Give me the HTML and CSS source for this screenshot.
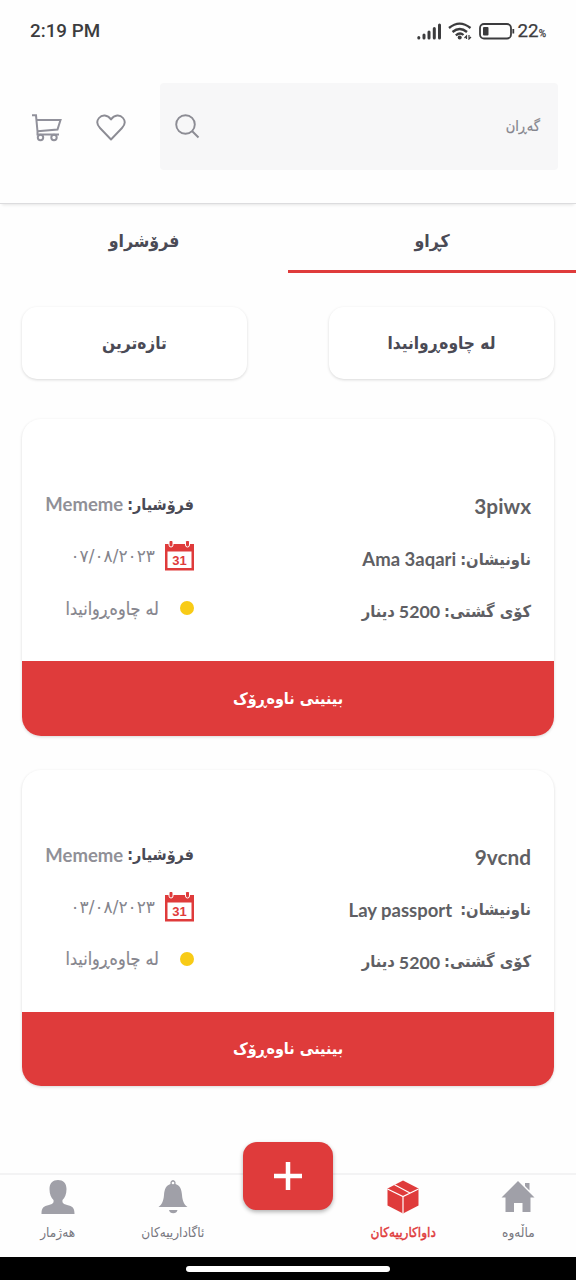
FILE: index.html
```html
<!DOCTYPE html>
<html lang="ckb" dir="rtl">
<head>
<meta charset="utf-8">
<meta name="viewport" content="width=device-width">
<title>داواکارییەکان</title>
<link rel="stylesheet" href="styles.css">
</head>
<body>
<div class="app">
  <div class="status" dir="ltr">
    <span class="clock">2:19 PM</span>
    <svg class="signal" width="25" height="18" viewBox="0 0 25 18"><path d="M1.800 15.500v.5M7 13v3M12 10v6M17.300 6.500v9.500M22.500 3v13" fill="none" stroke="#3c3c3e" stroke-width="3" stroke-linecap="round"/></svg>
    <svg class="wifi" width="24" height="18" viewBox="0 0 24 18"><g fill="none" stroke="#3c3c3e" stroke-width="2.300"><path d="M1 6Q11.500-2.800 22.500 6M4.500 10Q11.700 4 19 10M7.800 13.300Q12 9.800 15.500 13"/></g><circle cx="11.700" cy="15.500" r="2" fill="#3c3c3e"/><path d="M18.500 17v-3l-2 2M21 13v4l2-2" fill="none" stroke="#3c3c3e" stroke-width="1.200"/></svg>
    <svg class="battery" width="36" height="17" viewBox="0 0 36 17"><rect x="1" y="1" width="31" height="14.500" rx="4" fill="none" stroke="#3c3c3e" stroke-width="1.800"/><rect x="4" y="4" width="5.500" height="8.500" rx="1" fill="#3c3c3e"/><path d="M34.300 6v4.500" stroke="#3c3c3e" stroke-width="1.800"/></svg>
    <span class="charge">22<small>%</small></span>
  </div>

  <header class="header" dir="ltr">
    <svg class="cart" width="31" height="28" viewBox="0 0 31 28"><g fill="none" stroke="#91919b" stroke-width="2"><path d="M0 1.300H4L5.500 17.500V20.500H27"/><path d="M4.500 6H28.500L25.500 15.500L5.500 17.300"/><circle cx="8.500" cy="23.500" r="2.700"/><circle cx="22" cy="23.500" r="2.700"/></g></svg>
    <svg class="heart" width="30" height="27" viewBox="0 0 30 27"><path d="M15 25.500L4 14C1 10.800.5 7 3 4C6 .5 11.500.5 15 5.500C18.500.5 24 .5 27 4C29.500 7 29 10.800 26 14Z" fill="none" stroke="#8c8c94" stroke-width="1.900" stroke-linejoin="round"/></svg>
    <div class="search">
      <svg width="25" height="25" viewBox="0 0 25 25"><g fill="none" stroke="#8c8c94" stroke-width="1.900"><circle cx="10.500" cy="10.500" r="9.300"/><path d="M17 17L23.500 23.500"/></g></svg>
      <span class="hint" dir="rtl">گەڕان</span>
    </div>
  </header>

  <nav class="tabs">
    <a class="tab active"><span>کڕاو</span></a>
    <a class="tab"><span>فرۆشراو</span></a>
  </nav>

  <div class="filters">
    <div class="filter"><span>لە چاوەڕوانیدا</span></div>
    <div class="filter"><span>تازەترین</span></div>
  </div>

  <main class="orders">
    <article class="card">
      <div class="info">
        <div class="main-col">
          <div class="code">3piwx</div>
          <div class="row"><span>ناونیشان:</span><span class="latin" dir="ltr">Ama 3aqari</span></div>
          <div class="row"><span>کۆی گشتی:</span><span class="latin amount">5200</span><span>دینار</span></div>
        </div>
        <div class="side-col">
          <div class="row seller"><span>فرۆشیار:</span><span class="latin muted" dir="ltr">Mememe</span></div>
          <div class="row date"><svg class="cal" width="29" height="30" viewBox="0 0 29 30"><path d="M0 3H29V29.500H0Z" fill="#df3b3b"/><path d="M2.500 10.500H26.500V27H2.500Z" fill="#fff"/><rect x="4" y="-1" width="4" height="7" rx="2" fill="#df3b3b" stroke="#fff"/><rect x="20.500" y="-1" width="4" height="7" rx="2" fill="#df3b3b" stroke="#fff"/><text x="14.500" y="23.500" text-anchor="middle" class="cal-day">31</text></svg><span class="date-text" dir="ltr">٠٧/٠٨/٢٠٢٣</span></div>
          <div class="row state"><i class="dot"></i><span class="state-text">لە چاوەڕوانیدا</span></div>
        </div>
      </div>
      <div class="view"><span>بینینی ناوەڕۆک</span></div>
    </article>

    <article class="card">
      <div class="info">
        <div class="main-col">
          <div class="code">9vcnd</div>
          <div class="row wide"><span>ناونیشان:</span><span class="latin" dir="ltr">Lay passport</span></div>
          <div class="row"><span>کۆی گشتی:</span><span class="latin amount">5200</span><span>دینار</span></div>
        </div>
        <div class="side-col">
          <div class="row seller"><span>فرۆشیار:</span><span class="latin muted" dir="ltr">Mememe</span></div>
          <div class="row date"><svg class="cal" width="29" height="30" viewBox="0 0 29 30"><path d="M0 3H29V29.500H0Z" fill="#df3b3b"/><path d="M2.500 10.500H26.500V27H2.500Z" fill="#fff"/><rect x="4" y="-1" width="4" height="7" rx="2" fill="#df3b3b" stroke="#fff"/><rect x="20.500" y="-1" width="4" height="7" rx="2" fill="#df3b3b" stroke="#fff"/><text x="14.500" y="23.500" text-anchor="middle" class="cal-day">31</text></svg><span class="date-text" dir="ltr">٠٣/٠٨/٢٠٢٣</span></div>
          <div class="row state"><i class="dot"></i><span class="state-text">لە چاوەڕوانیدا</span></div>
        </div>
      </div>
      <div class="view"><span>بینینی ناوەڕۆک</span></div>
    </article>
  </main>

  <nav class="bottom">
    <a class="item"><svg width="34" height="34" viewBox="0 0 34 34"><path d="M17 1L33.500 17.500H29.500V32H21.500V23H13V32H4.500V17.500H.5ZM24 3H28.500V10.500L24 6Z" fill="#a0a0a8"/></svg><span>ماڵەوە</span></a>
    <a class="item on"><svg width="34" height="34" viewBox="0 0 34 34"><path d="M17 .5L32.500 8.500V25.500L17 33.500L1.500 25.500V8.500Z" fill="#df3b3b"/><path d="M1.500 9L17 16.500L32.500 9M17 16.500V33.500M8.500 4.800L24 13" fill="none" stroke="#fff" stroke-width="1.200"/></svg><span>داواکارییەکان</span></a>
    <a class="item gap"></a>
    <a class="item"><svg width="34" height="34" viewBox="0 0 34 34"><path d="M17 0A3 3 0 0 1 19.500 4C24 5.500 25.500 9 26 15C26.500 21 28 24.500 31.500 27H2.500C6 24.500 7.500 21 8 15C8.500 9 10 5.500 14.500 4A3 3 0 0 1 17 0ZM13 30H21.500A4.400 4.400 0 0 1 13 30Z" fill="#a0a0a8"/><circle cx="17" cy="3" r="1.300" fill="#fff"/></svg><span>ئاگادارییەکان</span></a>
    <a class="item"><svg width="34" height="34" viewBox="0 0 34 34"><path d="M17 0C22 0 25.500 3 25.500 9C25.500 14 24 17.500 21.500 20C21 23 22.500 24 26 25C31.500 26.300 33.500 27.500 33.500 34H.5C.5 27.500 2.500 26.300 8 25C11.500 24 13 23 12.500 20C10 17.500 8.500 14 8.500 9C8.500 3 12 0 17 0Z" fill="#a0a0a8"/></svg><span>هەژمار</span></a>
    <a class="add"><svg width="28" height="28" viewBox="0 0 28 28"><path d="M14 0V28M0 14H28" stroke="#fff" stroke-width="4.500"/></svg></a>
  </nav>
  <div class="gesture"><i></i></div>
</div>
</body>
</html>
```
FILE: styles.css
```css
* { box-sizing: border-box; }
body {
  margin: 0;
  background: #fefefe;
  color: #4a4a55;
  font-family: "DejaVu Sans Condensed", "DejaVu Sans", sans-serif;
  font-weight: 700;
}
.app { width: 576px; height: 1280px; display: flex; flex-direction: column; overflow: hidden; }
.app span { white-space: nowrap; }

.status {
  height: 62px;
  padding: 0 30px;
  display: flex;
  align-items: center;
  font-family: Roboto, sans-serif;
  font-weight: 500;
  color: #3c3c3e;
}
.clock { font-size: 18.800px; margin-right: auto; }
.signal { margin-right: 6px; }
.wifi { margin-right: 7px; }
.battery { margin-right: 3px; }
.charge { font-size: 18.800px; font-weight: 400; -webkit-text-stroke: .25px; }
.charge small { font-size: 10px; }

.header {
  height: 142px;
  padding: 21px 18px 34px 32px;
  display: flex;
  align-items: center;
  border-bottom: 1px solid #dcdcde;
  box-shadow: 0 3px 3px -2px #0000001a;
}
.cart { margin-top: 3px; }
.heart { margin: 3px 34px 0 33px; }
.search {
  flex: 1;
  height: 87px;
  padding: 0 18px 0 15px;
  display: flex;
  align-items: center;
  justify-content: space-between;
  background: #f7f7f8;
  border-radius: 4px;
}
.hint { font-size: 14.500px; font-weight: 400; color: #85858d; -webkit-text-stroke: .2px; }

.tabs { height: 69px; display: flex; }
.tab {
  width: 288px;
  display: flex;
  justify-content: center;
  line-height: 75px;
  font-size: 17.600px;
}
.tab.active { border-bottom: 3px solid #df3b3b; }

.filters { padding: 34px 22px 0; display: flex; justify-content: space-between; }
.filter {
  width: 225px;
  height: 72px;
  display: flex;
  justify-content: center;
  line-height: 73px;
  font-size: 17.200px;
  background: #fff;
  border-radius: 15px;
  box-shadow: 0 1px 3px #00000026;
}

.orders { padding: 40px 22px 0; display: flex; flex-direction: column; gap: 34px; }
.card {
  height: 316.500px;
  display: flex;
  flex-direction: column;
  background: #fff;
  border-radius: 19px;
  box-shadow: 0 1px 3px #00000026;
  overflow: hidden;
}
.info {
  height: 242px;
  padding: 59px 23px 0 0;
  display: flex;
  justify-content: space-between;
}
.side-col { width: 172px; }
.side-col, .main-col { display: flex; flex-direction: column; }
.code { height: 55px; font: 700 20.800px/55px Lato, sans-serif; color: #5f5f64; text-align: right; }
.row { height: 52px; display: flex; align-items: center; gap: 4px; font-size: 16.400px; color: #5f5f64; }
.row.wide { gap: 8px; }
.side-col .row { gap: 0; }
.seller { color: #4a4a55; }
.side-col .seller { gap: 4px; font-size: 16px; }
.latin { font-family: Lato, sans-serif; font-size: 18.500px; }
.latin.amount { font-size: 17.800px; }
.muted { color: #909097; }
.date-text { margin-right: 10px; font-family: "DejaVu Sans", sans-serif; font-size: 17px; font-weight: 400; color: #85858d; }
.cal-day { font: 700 13px "Liberation Sans", sans-serif; fill: #df3b3b; }
.dot { width: 14px; height: 14px; border-radius: 50%; background: #f8cb16; }
.state-text { margin-right: 21px; font-size: 17.800px; font-weight: 400; color: #85858d; -webkit-text-stroke: .2px; }
.view {
  flex: 1;
  display: flex;
  align-items: center;
  justify-content: center;
  background: #df3b3b;
  color: #fff;
  font-size: 16px;
}

.bottom {
  position: relative;
  margin-top: auto;
  height: 84px;
  padding-top: 5px;
  display: flex;
  border-top: 2px solid #f3f3f4;
}
.item {
  width: 115.200px;
  display: flex;
  flex-direction: column;
  align-items: center;
  gap: 7px;
  font-size: 13.500px;
  line-height: 22px;
  font-weight: 400;
  color: #77777e;
}
.item.on { color: #df3b3b; -webkit-text-stroke: .4px; }
.add {
  position: absolute;
  left: 243px;
  top: -33px;
  width: 90px;
  height: 68px;
  display: flex;
  align-items: center;
  justify-content: center;
  background: #df3b3b;
  border-radius: 14px;
  box-shadow: 0 2px 4px #0000004d;
}
.gesture { height: 23px; background: #000; display: flex; justify-content: center; padding-top: 9px; }
.gesture i { width: 204px; height: 6px; border-radius: 3px; background: #fff; }
```
